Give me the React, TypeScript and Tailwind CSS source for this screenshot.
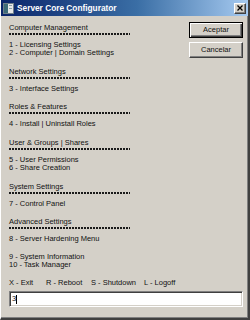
import React from "react";

const font = { fontFamily: '"Liberation Sans", Arial, sans-serif' };

function Header({ title, children }: { title: string; children: React.ReactNode }) {
  return (
    <div className="flex flex-col">
      <div className="h-[9px] leading-[9px] whitespace-nowrap">{title}</div>
      <div className="mt-[1px] h-[2px] w-[121px] bg-[repeating-linear-gradient(90deg,#1a1a1a_0px,#1a1a1a_2px,transparent_2px,transparent_3px)]" />
      <div className="mt-[6px] flex flex-col leading-[8.5px]">{children}</div>
    </div>
  );
}

function Item({ children }: { children: React.ReactNode }) {
  return <div className="h-[8.5px] whitespace-nowrap">{children}</div>;
}

export default function App() {
  return (
    <div
      className="w-[250px] h-[320px] bg-[#d4d0c8] text-[#111] flex flex-col overflow-hidden border-r-2 border-b-2 border-r-[#404040] border-b-[#404040] border-l border-l-[#ffffff]"
      style={font}
    >
      {/* Title bar */}
      <div className="h-[16px] flex items-center bg-[linear-gradient(90deg,#0a246a,#3a6ea5_55%,#a6caf0)]">
        <svg width="11" height="11" viewBox="0 0 11 11" className="ml-[2px]">
          <rect x="0" y="0" width="11" height="11" fill="#e8e8e8" />
          <rect x="0.5" y="0.5" width="10" height="10" fill="none" stroke="#6f7f8a" />
          <rect x="1" y="1" width="4" height="9" fill="#3d6b78" />
          <rect x="6" y="2" width="3" height="1" fill="#8aa0aa" />
          <rect x="6" y="5" width="3" height="1" fill="#8aa0aa" />
        </svg>
        <span className="ml-[3px] text-white font-bold text-[8.3px] leading-none whitespace-nowrap">
          Server Core Configurator
        </span>
        <div className="ml-auto mr-[2px] w-[12px] h-[11px] bg-[#d4d0c8] flex items-center justify-center border border-t-white border-l-white border-r-[#404040] border-b-[#404040] shadow-[inset_-1px_-1px_0_#808080]">
          <svg width="6" height="6" viewBox="0 0 6 6">
            <path d="M0.5 0.5 L5.5 5.5 M5.5 0.5 L0.5 5.5" stroke="#000" strokeWidth="1.3" />
          </svg>
        </div>
      </div>

      {/* Body */}
      <div className="flex-1 flex flex-col pl-[8px] pr-[5px] text-[7.5px] shadow-[inset_-1px_-1px_0_#808080]">
        <div className="flex">
          <div className="flex-1 flex flex-col gap-[9px] pt-[6.5px]">
            <Header title="Computer Management">
              <Item>1 - Licensing Settings</Item>
              <Item>2 - Computer | Domain Settings</Item>
            </Header>
            <Header title="Network Settings">
              <Item>3 - Interface Settings</Item>
            </Header>
            <Header title="Roles &amp; Features">
              <Item>4 - Install | Uninstall Roles</Item>
            </Header>
            <Header title="User &amp; Groups | Shares">
              <Item>5 - User Permissions</Item>
              <Item>6 - Share Creation</Item>
            </Header>
            <Header title="System Settings">
              <Item>7 - Control Panel</Item>
            </Header>
            <Header title="Advanced Settings">
              <Item>8 - Server Hardening Menu</Item>
            </Header>
            <div className="flex flex-col leading-[8.5px]">
              <Item>9 - System Information</Item>
              <Item>10 - Task Manager</Item>
            </div>
            <div className="flex leading-[8.5px] whitespace-nowrap">
              <span className="w-[37px]">X - Exit</span>
              <span className="w-[45px]">R - Reboot</span>
              <span className="w-[53px]">S - Shutdown</span>
              <span>L - Logoff</span>
            </div>
          </div>
          <div className="flex flex-col gap-[4px] pt-[6px]">
            <button className="w-[54px] h-[16px] bg-[#d4d0c8] border border-black shadow-[inset_1px_1px_0_#ffffff,inset_-1px_-1px_0_#404040,inset_-2px_-2px_0_#808080] text-[7.5px] leading-none flex items-center justify-center">
              Aceptar
            </button>
            <button className="w-[54px] h-[16px] bg-[#d4d0c8] border border-t-white border-l-white border-r-[#404040] border-b-[#404040] shadow-[inset_-1px_-1px_0_#808080] text-[7.5px] leading-none flex items-center justify-center">
              Cancelar
            </button>
          </div>
        </div>
        <div className="mt-[4px] h-[16px] w-[234px] bg-white border border-t-[#808080] border-l-[#808080] border-r-white border-b-white shadow-[inset_1px_1px_0_#404040,inset_-1px_-1px_0_#d4d0c8] flex items-center pl-[2px]">
          <span className="leading-none">3</span>
          <span className="w-[1px] h-[9px] bg-black" />
        </div>
      </div>
    </div>
  );
}
